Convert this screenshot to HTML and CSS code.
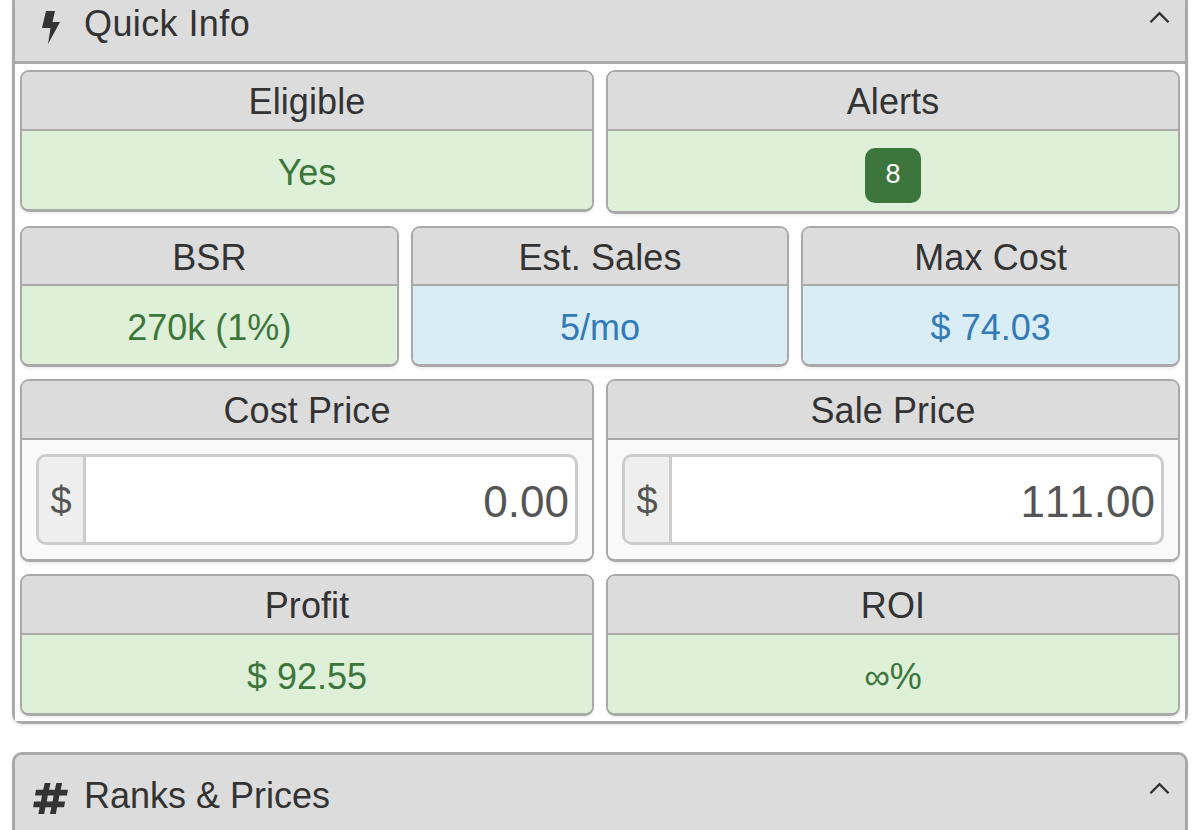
FILE: index.html
```html
<!DOCTYPE html>
<html lang="en">
<head>
<meta charset="utf-8">
<title>Quick Info</title>
<link rel="stylesheet" href="styles.css">
</head>
<body>
<main class="page">
  <section class="panel panel-open">
    <header class="panel-head panel-head-cut">
      <svg class="head-icon bolt" viewBox="0 0 18 33"><path d="M4 0h9l-2.500 11H18L6 33l2.500-16H0z"/></svg>
      <span class="panel-title">Quick Info</span>
      <svg class="chevron" viewBox="0 0 22 13"><path d="M1.500 11.500 11 2l9.500 9.500"/></svg>
    </header>
    <div class="panel-body">
      <div class="row">
        <div class="card"><div class="card-head">Eligible</div><div class="card-value good">Yes</div></div>
        <div class="card"><div class="card-head">Alerts</div><div class="card-value good badge-wrap"><span class="badge">8</span></div></div>
      </div>
      <div class="row">
        <div class="card"><div class="card-head">BSR</div><div class="card-value good">270k (1%)</div></div>
        <div class="card"><div class="card-head">Est. Sales</div><div class="card-value info">5/mo</div></div>
        <div class="card"><div class="card-head">Max Cost</div><div class="card-value info">$ 74.03</div></div>
      </div>
      <div class="row">
        <div class="card"><div class="card-head">Cost Price</div><div class="card-input"><div class="input-group"><span class="addon">$</span><span class="input">0.00</span></div></div></div>
        <div class="card"><div class="card-head">Sale Price</div><div class="card-input"><div class="input-group"><span class="addon">$</span><span class="input">111.00</span></div></div></div>
      </div>
      <div class="row row-last">
        <div class="card"><div class="card-head">Profit</div><div class="card-value good">$ 92.55</div></div>
        <div class="card"><div class="card-head">ROI</div><div class="card-value good">∞%</div></div>
      </div>
    </div>
  </section>
  <section class="panel panel-next">
    <header class="panel-head panel-head-next">
      <svg class="head-icon hash" viewBox="0 0 36 32"><path d="M12 0h6l-1.500 7h6L24 0h6l-1.500 7H36l-1 6h-7.800l-1.100 6H33l-1 6h-7.200L23.500 32h-6l1.300-7h-6l-1.300 7h-6l1.300-7H0l1-6h7.100l1.100-6H2l1-6h7.500zm3.200 13-1.100 6h6l1.100-6z" fill-rule="evenodd"/></svg>
      <span class="panel-title">Ranks &amp; Prices</span>
      <svg class="chevron" viewBox="0 0 22 13"><path d="M1.500 11.500 11 2l9.500 9.500"/></svg>
    </header>
  </section>
</main>
</body>
</html>
```
FILE: styles.css
```css
* { box-sizing: border-box; }
html, body { margin: 0; height: 830px; overflow: hidden; background: #fff; }
body { font-family: "Liberation Sans", Arial, sans-serif; color: #333; }
.page { padding: 0 12px; }

.panel { border: 3px solid #a9a9a9; border-radius: 10px; box-shadow: 0 2px 3px rgba(0,0,0,.08); }
.panel-open { border-top: 0; border-radius: 0 0 10px 10px; }
.panel-next { margin-top: 28px; height: 90px; }

.panel-head { display: flex; background: #dcdcdc; }
.panel-head-cut { height: 64px; padding: 11px 15px 0 27px; border-bottom: 3px solid #a9a9a9; }
.panel-head-next { height: 85px; border-radius: 7px 7px 0 0; padding: 27px 15px 0 18px; }
.panel-title { font-size: 36px; line-height: 40px; flex: 1; }
.panel-head-cut .panel-title { margin: -7px 0 0 24px; letter-spacing: .4px; }
.panel-head-next .panel-title { margin: -6px 0 0 16px; }
.head-icon { fill: #333; display: block; flex: none; }
.bolt { width: 18px; height: 33px; }
.hash { width: 35px; height: 31px; margin-top: 1px; }
.chevron { width: 21px; height: 13px; fill: none; stroke: #333; stroke-width: 2.5; flex: none; }

.panel-body { padding: 6px 5px 5px; background: #fff; }
.row { display: flex; gap: 12px; margin-bottom: 12px; align-items: flex-start; }
.row .card { flex: 1 1 0; min-width: 0; }
.row-last { margin-bottom: 0; }
.card { border: 2px solid #a9a9a9; border-bottom-width: 3px; border-radius: 9px; overflow: hidden; box-shadow: 0 2px 3px rgba(0,0,0,.07); text-align: center; }
.card-head { background: #dcdcdc; border-bottom: 2.500px solid #a9a9a9; height: 58.500px; font-size: 36px; line-height: 60px; letter-spacing: .1px; }
.card-value { height: 78px; line-height: 84px; font-size: 36px; }
.good { background: #dff0d8; color: #3c763d; }
.info { background: #d9edf7; color: #337ab7; }
.badge-wrap { height: 80px; padding-top: 17px; }
.badge { display: block; width: 56px; height: 55px; margin: 0 auto; border-radius: 10px; background: #3c763d; color: #fff; font-size: 27px; line-height: 52px; }

.card-input { background: #f9f9f9; height: 119.500px; padding: 14.500px 14px 0; }
.input-group { display: flex; height: 91px; border: 3px solid #ccc; border-radius: 10px; overflow: hidden; background: #fff; }
.addon { width: 47px; flex: none; background: #eee; border-right: 3px solid #ccc; color: #555; font-size: 38px; line-height: 89px; text-align: center; }
.input { flex: 1; text-align: right; color: #555; font-size: 44px; line-height: 90px; padding-right: 6px; font-kerning: none; }
```
